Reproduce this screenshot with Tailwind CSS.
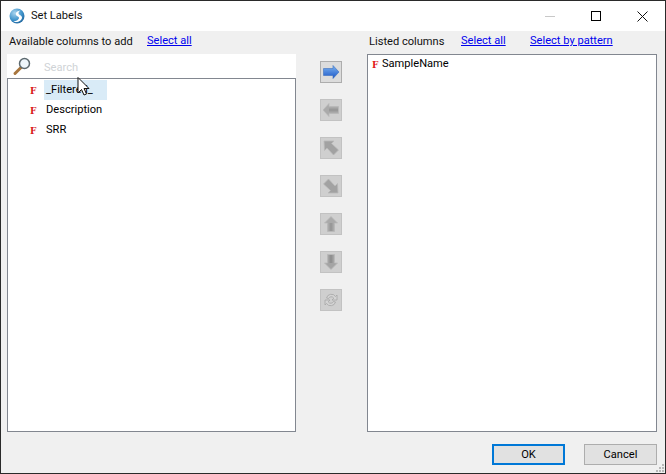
<!DOCTYPE html>
<html>
<head>
<meta charset="utf-8">
<script src="https://cdn.jsdelivr.net/npm/@tailwindcss/browser@4"></script>
</head>
<body class="m-0 overflow-hidden bg-[#f0f0f0]">
<div class="relative flex flex-col w-[666px] h-[474px] border border-[#2a2a2a] bg-[#f0f0f0] text-[11.1px] text-black font-['Roboto',sans-serif] leading-[16px]">
  <!-- title bar -->
  <div class="flex items-center h-[30px] bg-white shrink-0">
    <svg class="ml-[8px] w-[16px] h-[16px]" viewBox="0 0 16 16">
      <defs><radialGradient id="g" cx="0.35" cy="0.3" r="0.8"><stop offset="0" stop-color="#a9d4ee"/><stop offset="0.6" stop-color="#3f93cb"/><stop offset="1" stop-color="#1d5f96"/></radialGradient></defs>
      <circle cx="8" cy="8" r="7.5" fill="url(#g)"/>
      <path d="M11.5 2.5C8 3 6 5 7 7c1 1.500 3 1.500 3 3 0 1.500-2.500 3-5.500 3.500C8 15 13 13 13 9.500 13 7.500 10 7 9.500 5.500 9.300 4.500 10 3.500 11.500 2.500Z" fill="#fff"/>
    </svg>
    <span class="ml-[6px] text-[#111]">Set Labels</span>
    <div class="ml-auto flex items-center h-full">
      <div class="w-[46px] h-full flex items-center justify-center"><div class="w-[10px] h-px bg-[#c8c8c8]"></div></div>
      <div class="w-[46px] h-full flex items-center justify-center"><div class="w-[10px] h-[10px] border border-black"></div></div>
      <div class="w-[46px] h-full flex items-center justify-center">
        <svg class="w-[11px] h-[11px]" viewBox="0 0 11 11"><path d="M.5.5l10 10M10.500.5l-10 10" stroke="#111" stroke-width="1" fill="none"/></svg>
      </div>
    </div>
  </div>
  <!-- content -->
  <div class="flex flex-1 min-h-0 pl-[6px] pr-[8px]">
    <!-- left -->
    <div class="flex flex-col w-[289px] shrink-0">
      <div class="flex h-[23px] items-start pl-[2px] pt-[3px]">
        <span class="text-[#111] w-[138px]">Available columns to add</span>
        <a class="text-[#0000ee] underline -mt-px">Select all</a>
      </div>
      <div class="flex items-center h-[24px] bg-white">
        <svg class="ml-[5px] w-[20px] h-[20px]" viewBox="0 0 20 20">
          <path d="M9 11.500L3 17.500" stroke="#a8763e" stroke-width="3" stroke-linecap="round"/>
          <circle cx="12.500" cy="7.500" r="5" fill="#eef6fb" stroke="#5d6a70" stroke-width="1.500"/>
        </svg>
        <span class="ml-[12px] mt-[3px] text-[#cfd3d6]">Search</span>
      </div>
      <div class="relative flex-1 min-h-0 bg-white border border-[#828790] pt-px">
        <div class="flex items-center h-[20px]">
          <span class="w-[37px] pl-[22px] text-[#d81818] font-bold font-['DejaVu_Serif',serif] text-[9px] pt-[2px]">F</span>
          <span class="w-[63px] h-[20px] -ml-[1px] pl-[2px] pt-[2px] bg-[#d9ebf7]">_Filtered_</span>
        </div>
        <div class="flex items-center h-[20px]">
          <span class="w-[37px] pl-[22px] text-[#d81818] font-bold font-['DejaVu_Serif',serif] text-[9px] pt-[2px]">F</span>
          <span class="pl-[1px]">Description</span>
        </div>
        <div class="flex items-center h-[20px]">
          <span class="w-[37px] pl-[22px] text-[#d81818] font-bold font-['DejaVu_Serif',serif] text-[9px] pt-[2px]">F</span>
          <span class="pl-[1px]">SRR</span>
        </div>
      </div>
    </div>
    <!-- middle -->
    <div class="flex flex-col items-center w-[71px] shrink-0 pt-[30px] pr-[2px] gap-[16px]">
      <div class="w-[22px] h-[22px] bg-[#dcdcdc] border border-[#adadad] flex items-center justify-center">
        <svg class="w-[18px] h-[18px]" viewBox="0 0 18 18"><defs><linearGradient id="b" x1="0" y1="0" x2="0" y2="1"><stop offset="0" stop-color="#7db4f0"/><stop offset="1" stop-color="#1b57c8"/></linearGradient></defs><path d="M1.500 5.500h9.500V2.500L17 9l-6 6.500v-3H1.500Z" fill="url(#b)" stroke="#3a6fc0" stroke-width=".6"/></svg>
      </div>
      <div class="w-[22px] h-[22px] bg-[#cfcfcf] border border-[#c2c2c2] flex items-center justify-center">
        <svg class="w-[18px] h-[18px]" viewBox="0 0 18 18"><path d="M16.500 5.500H7V2.500L1 9l6 6.500v-3h9.500Z" fill="#aaaaaa" stroke="#b9b9b9" stroke-width=".8"/><path d="M7 7.500h9v3H7Z" fill="#989898"/></svg>
      </div>
      <div class="w-[22px] h-[22px] bg-[#cfcfcf] border border-[#c2c2c2] flex items-center justify-center">
        <svg class="w-[18px] h-[18px]" viewBox="0 0 18 18"><path d="M2 2h10L9.500 4.500l7 6.500-5 5-6.500-7L2.500 11.500Z" fill="#a2a2a2" stroke="#b9b9b9" stroke-width=".8"/></svg>
      </div>
      <div class="w-[22px] h-[22px] bg-[#cfcfcf] border border-[#c2c2c2] flex items-center justify-center">
        <svg class="w-[18px] h-[18px]" viewBox="0 0 18 18"><path d="M16 16H6l2.500-2.500-7-6.500 5-5 6.500 7L15.500 6.500Z" fill="#a2a2a2" stroke="#b9b9b9" stroke-width=".8"/></svg>
      </div>
      <div class="w-[22px] h-[22px] bg-[#cfcfcf] border border-[#c2c2c2] flex items-center justify-center">
        <svg class="w-[18px] h-[18px]" viewBox="0 0 18 18"><path d="M5.500 16.500V8H2.500L9 1.500 15.500 8H12.500v8.500Z" fill="#aaaaaa" stroke="#b9b9b9" stroke-width=".8"/><path d="M7.500 8h3v8h-3Z" fill="#989898"/></svg>
      </div>
      <div class="w-[22px] h-[22px] bg-[#cfcfcf] border border-[#c2c2c2] flex items-center justify-center">
        <svg class="w-[18px] h-[18px]" viewBox="0 0 18 18"><path d="M5.500 1.500V10H2.500L9 16.500 15.500 10H12.500V1.500Z" fill="#a4a4a4" stroke="#b9b9b9" stroke-width=".8"/><path d="M7.500 2h3v8h-3Z" fill="#909090"/></svg>
      </div>
      <div class="w-[22px] h-[22px] bg-[#cfcfcf] border border-[#c2c2c2] flex items-center justify-center">
        <svg class="w-[18px] h-[18px]" viewBox="0 0 18 18"><path d="M4.500 7A5 5 0 0 1 13.500 5.500L15 4v5h-5l1.800-1.800A3 3 0 0 0 6.500 7.500ZM13.500 11A5 5 0 0 1 4.500 12.500L3 14V9h5L6.200 10.800A3 3 0 0 0 11.500 10.500Z" fill="#d4d4d4" stroke="#a6a6a6" stroke-width=".8"/></svg>
      </div>
    </div>
    <!-- right -->
    <div class="flex flex-col w-[290px] shrink-0">
      <div class="flex h-[23px] items-start pl-[2px] pt-[3px]">
        <span class="text-[#111] w-[92px]">Listed columns</span>
        <a class="text-[#0000ee] underline -mt-px w-[69px]">Select all</a>
        <a class="text-[#0000ee] underline -mt-px">Select by pattern</a>
      </div>
      <div class="flex-1 min-h-0 bg-white border border-[#828790] pt-px">
        <div class="flex items-center h-[16px] pl-[4px]">
          <span class="w-[10px] text-[#e01818] font-bold font-['DejaVu_Serif',serif] text-[9px] pt-[1px]">F</span>
          <span>SampleName</span>
        </div>
      </div>
    </div>
  </div>
  <!-- footer -->
  <div class="flex justify-end items-start h-[41px] shrink-0 pt-[12px] pr-[8px] gap-[19px]">
    <button class="w-[73px] h-[21px] bg-[#e1e1e1] border-2 border-[#0078d7] flex items-center justify-center">OK</button>
    <button class="w-[73px] h-[21px] bg-[#e1e1e1] border border-[#adadad] flex items-center justify-center">Cancel</button>
  </div>
  <!-- resize grip -->
  <svg class="absolute right-0 bottom-0 w-[9px] h-[9px]" viewBox="0 0 9 9"><path d="M6 0h2v2H6zM3 3h2v2H3zM6 3h2v2H6zM0 6h2v2H0zM3 6h2v2H3zM6 6h2v2H6z" fill="#b8b8b8"/></svg>
  <!-- mouse cursor -->
  <svg class="absolute left-[76px] top-[76px] w-[14px] h-[20px]" viewBox="0 0 14 20"><path d="M1 .5V16l3.500-3.500L7 18l2.500-1L7 11.500h5Z" fill="#fff" stroke="#111" stroke-width="1"/></svg>
</div>
</body>
</html>
